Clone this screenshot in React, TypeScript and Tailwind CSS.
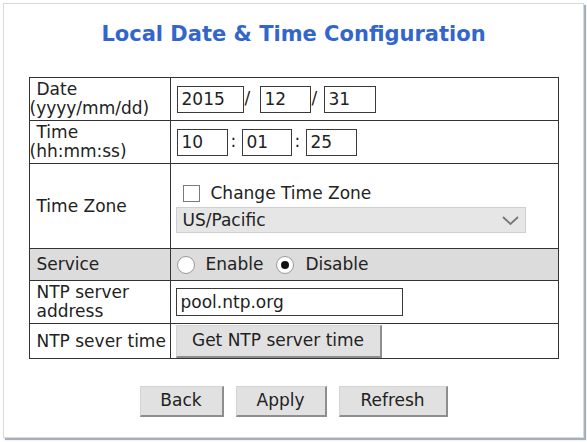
import React from 'react'

const inputCls =
  'h-[27px] border border-[#3a3a3a] bg-white px-[4px] text-[17px] leading-none text-[#222] outline-none'

const btnCls =
  'h-[31px] border border-[#d4d4d4] border-r-2 border-b-2 border-r-[#8e8e8e] border-b-[#8e8e8e] bg-[#e1e1e1] text-[17px] text-[#222]'

const Label: React.FC<{ children: React.ReactNode }> = ({ children }) => (
  <td className="w-[141px] border border-[#333] px-0 align-middle leading-[19px]">{children}</td>
)

export default function App() {
  return (
    <div className="h-[442px] w-[587px] bg-white p-[3px] font-['DejaVu_Sans',sans-serif] text-[17px] text-[#222]">
      <div className="flex h-[435px] w-[581px] flex-col items-center border border-[#d5dae0] bg-white shadow-[2px_2px_1px_#a7afb9]">
        <h1 className="mt-[17px] text-[21px] font-bold leading-[26px] text-[#3366cc]">
          Local Date &amp; Time Configuration
        </h1>

        <table className="mt-[30px] w-[530px] border-collapse border border-[#333]">
          <tbody>
            <tr className="h-[43px]">
              <Label>
                <span className="block pl-[7px]">Date</span>
                <span className="block">(yyyy/mm/dd)</span>
              </Label>
              <td className="border border-[#333] pl-[6px]">
                <div className="flex items-center">
                  <input readOnly value="2015" className={`${inputCls} w-[67px]`} />
                  <span className="ml-[1px] w-[15px]">/</span>
                  <input readOnly value="12" className={`${inputCls} w-[51px]`} />
                  <span className="ml-[1px] w-[12px]">/</span>
                  <input readOnly value="31" className={`${inputCls} w-[52px]`} />
                </div>
              </td>
            </tr>
            <tr className="h-[43px]">
              <Label>
                <span className="block pl-[7px]">Time</span>
                <span className="block">(hh:mm:ss)</span>
              </Label>
              <td className="border border-[#333] pl-[6px]">
                <div className="flex items-center">
                  <input readOnly value="10" className={`${inputCls} w-[51px]`} />
                  <span className="ml-[3px] w-[11px]">:</span>
                  <input readOnly value="01" className={`${inputCls} w-[50px]`} />
                  <span className="ml-[3px] w-[11px]">:</span>
                  <input readOnly value="25" className={`${inputCls} w-[51px]`} />
                </div>
              </td>
            </tr>
            <tr className="h-[85px]">
              <Label>
                <span className="block pl-[7px]">Time Zone</span>
              </Label>
              <td className="border border-[#333] pl-[5px] pt-[5px]">
                <div className="flex flex-col">
                  <div className="flex items-center pl-[7px]">
                    <span className="h-[17px] w-[17px] border border-[#7a7a7a] bg-white" />
                    <span className="ml-[11px] leading-[19px]">Change Time Zone</span>
                  </div>
                  <div className="mt-[4px] flex h-[26px] w-[350px] items-center justify-between border border-[#cfcfcf] bg-[#e6e6e6] pl-[6px] pr-[6px]">
                    <span className="leading-none">US/Pacific</span>
                    <svg width="17" height="9" viewBox="0 0 17 9" fill="none">
                      <polyline points="1,1 8.5,8 16,1" stroke="#777" strokeWidth="1.8" />
                    </svg>
                  </div>
                </div>
              </td>
            </tr>
            <tr className="h-[32px] bg-[#dcdcdc]">
              <Label>
                <span className="block pl-[7px]">Service</span>
              </Label>
              <td className="border border-[#333] pl-[6px]">
                <div className="flex items-center">
                  <span className="h-[18px] w-[18px] rounded-full border border-[#9a9a9a] bg-white" />
                  <span className="ml-[11px]">Enable</span>
                  <span className="ml-[13px] flex h-[18px] w-[18px] items-center justify-center rounded-full border border-[#9a9a9a] bg-white">
                    <span className="h-[8px] w-[8px] rounded-full bg-[#111]" />
                  </span>
                  <span className="ml-[11px]">Disable</span>
                </div>
              </td>
            </tr>
            <tr className="h-[43px]">
              <Label>
                <span className="block pl-[7px]">NTP server</span>
                <span className="block pl-[7px]">address</span>
              </Label>
              <td className="border border-[#333] pl-[5px]">
                <input
                  readOnly
                  value="pool.ntp.org"
                  className={`${inputCls} h-[28px] w-[227px]`}
                />
              </td>
            </tr>
            <tr className="h-[35px]">
              <Label>
                <span className="block whitespace-nowrap pl-[7px]">NTP sever time</span>
              </Label>
              <td className="border border-[#333] p-0 pl-[5px] align-middle">
                <button type="button" className={`${btnCls} block h-[33px] w-[206px]`}>
                  Get NTP server time
                </button>
              </td>
            </tr>
          </tbody>
        </table>

        <div className="mt-[27px] flex items-center gap-[12px]">
          <button type="button" className={`${btnCls} w-[84px]`}>
            Back
          </button>
          <button type="button" className={`${btnCls} w-[91px]`}>
            Apply
          </button>
          <button type="button" className={`${btnCls} w-[109px]`}>
            Refresh
          </button>
        </div>
      </div>
    </div>
  )
}
